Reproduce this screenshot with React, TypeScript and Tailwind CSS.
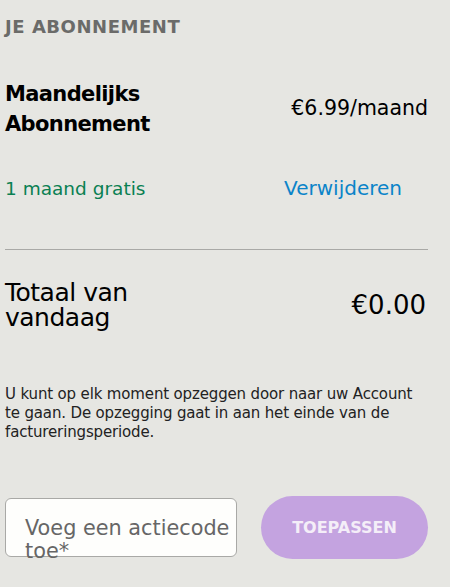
import React, { useState } from 'react';

const App: React.FC = () => {
  const [code, setCode] = useState('');

  return (
    <div className="w-[450px] h-[587px] overflow-hidden bg-[#e6e6e2] font-['DejaVu_Sans','Open_Sans',sans-serif] text-black">
      <div className="pl-[5px] pr-[22px] pt-[15px]">
        {/* Header */}
        <h2 className="text-[18px] leading-[24px] font-bold tracking-[0.03em] text-[#6b6b69]">JE ABONNEMENT</h2>

        {/* Plan row */}
        <div className="mt-[40px] flex items-start justify-between">
          <p className="text-[21px] leading-[30px] font-bold tracking-[-0.03em]">
            Maandelijks
            <br />
            Abonnement
          </p>
          <p className="mt-[17px] text-[20.5px] leading-[24px]">€6.99/maand</p>
        </div>

        {/* Promo row */}
        <div className="mt-[37px] flex items-baseline justify-between">
          <span className="text-[18.5px] leading-[24px] text-[#0a8052]">1 maand gratis</span>
          <button className="text-[20px] leading-[24px] text-[#0b84c9] pr-[26px]">Verwijderen</button>
        </div>

        <div className="mt-[48px] border-t border-[#a9a9a6]" />

        {/* Total */}
        <div className="mt-[30px] flex items-start justify-between">
          <p className="text-[25px] leading-[25px] tracking-[-0.02em]">
            Totaal van
            <br />
            vandaag
          </p>
          <p className="mt-[10px] text-[26px] leading-[30px] pr-[2px]">€0.00</p>
        </div>

        <p className="mt-[55px] text-[15px] leading-[19px] tracking-[-0.01em] text-[#222]">
          U kunt op elk moment opzeggen door naar uw Account te gaan. De opzegging gaat in aan het einde van de factureringsperiode.
        </p>

        {/* Promo code */}
        <div className="mt-[54px] flex items-center justify-between">
          <div className="relative w-[232px] h-[59px] rounded-[6px] border border-[#a9a9a6] bg-[#fefefc]">
            {code === '' && (
              <span className="pointer-events-none absolute left-[19px] top-[18px] text-[20.8px] leading-[23px] text-[#666]">
                Voeg een actiecode toe*
              </span>
            )}
            <input
              value={code}
              onChange={(e) => setCode(e.target.value)}
              className="w-full h-full bg-transparent px-[19px] text-[20px] outline-none"
            />
          </div>
          <button className="w-[167px] h-[63px] rounded-full bg-[#c4a3e0] text-[16px] font-bold text-[#f4eef8]">
            TOEPASSEN
          </button>
        </div>
      </div>
    </div>
  );
};

export default App;
